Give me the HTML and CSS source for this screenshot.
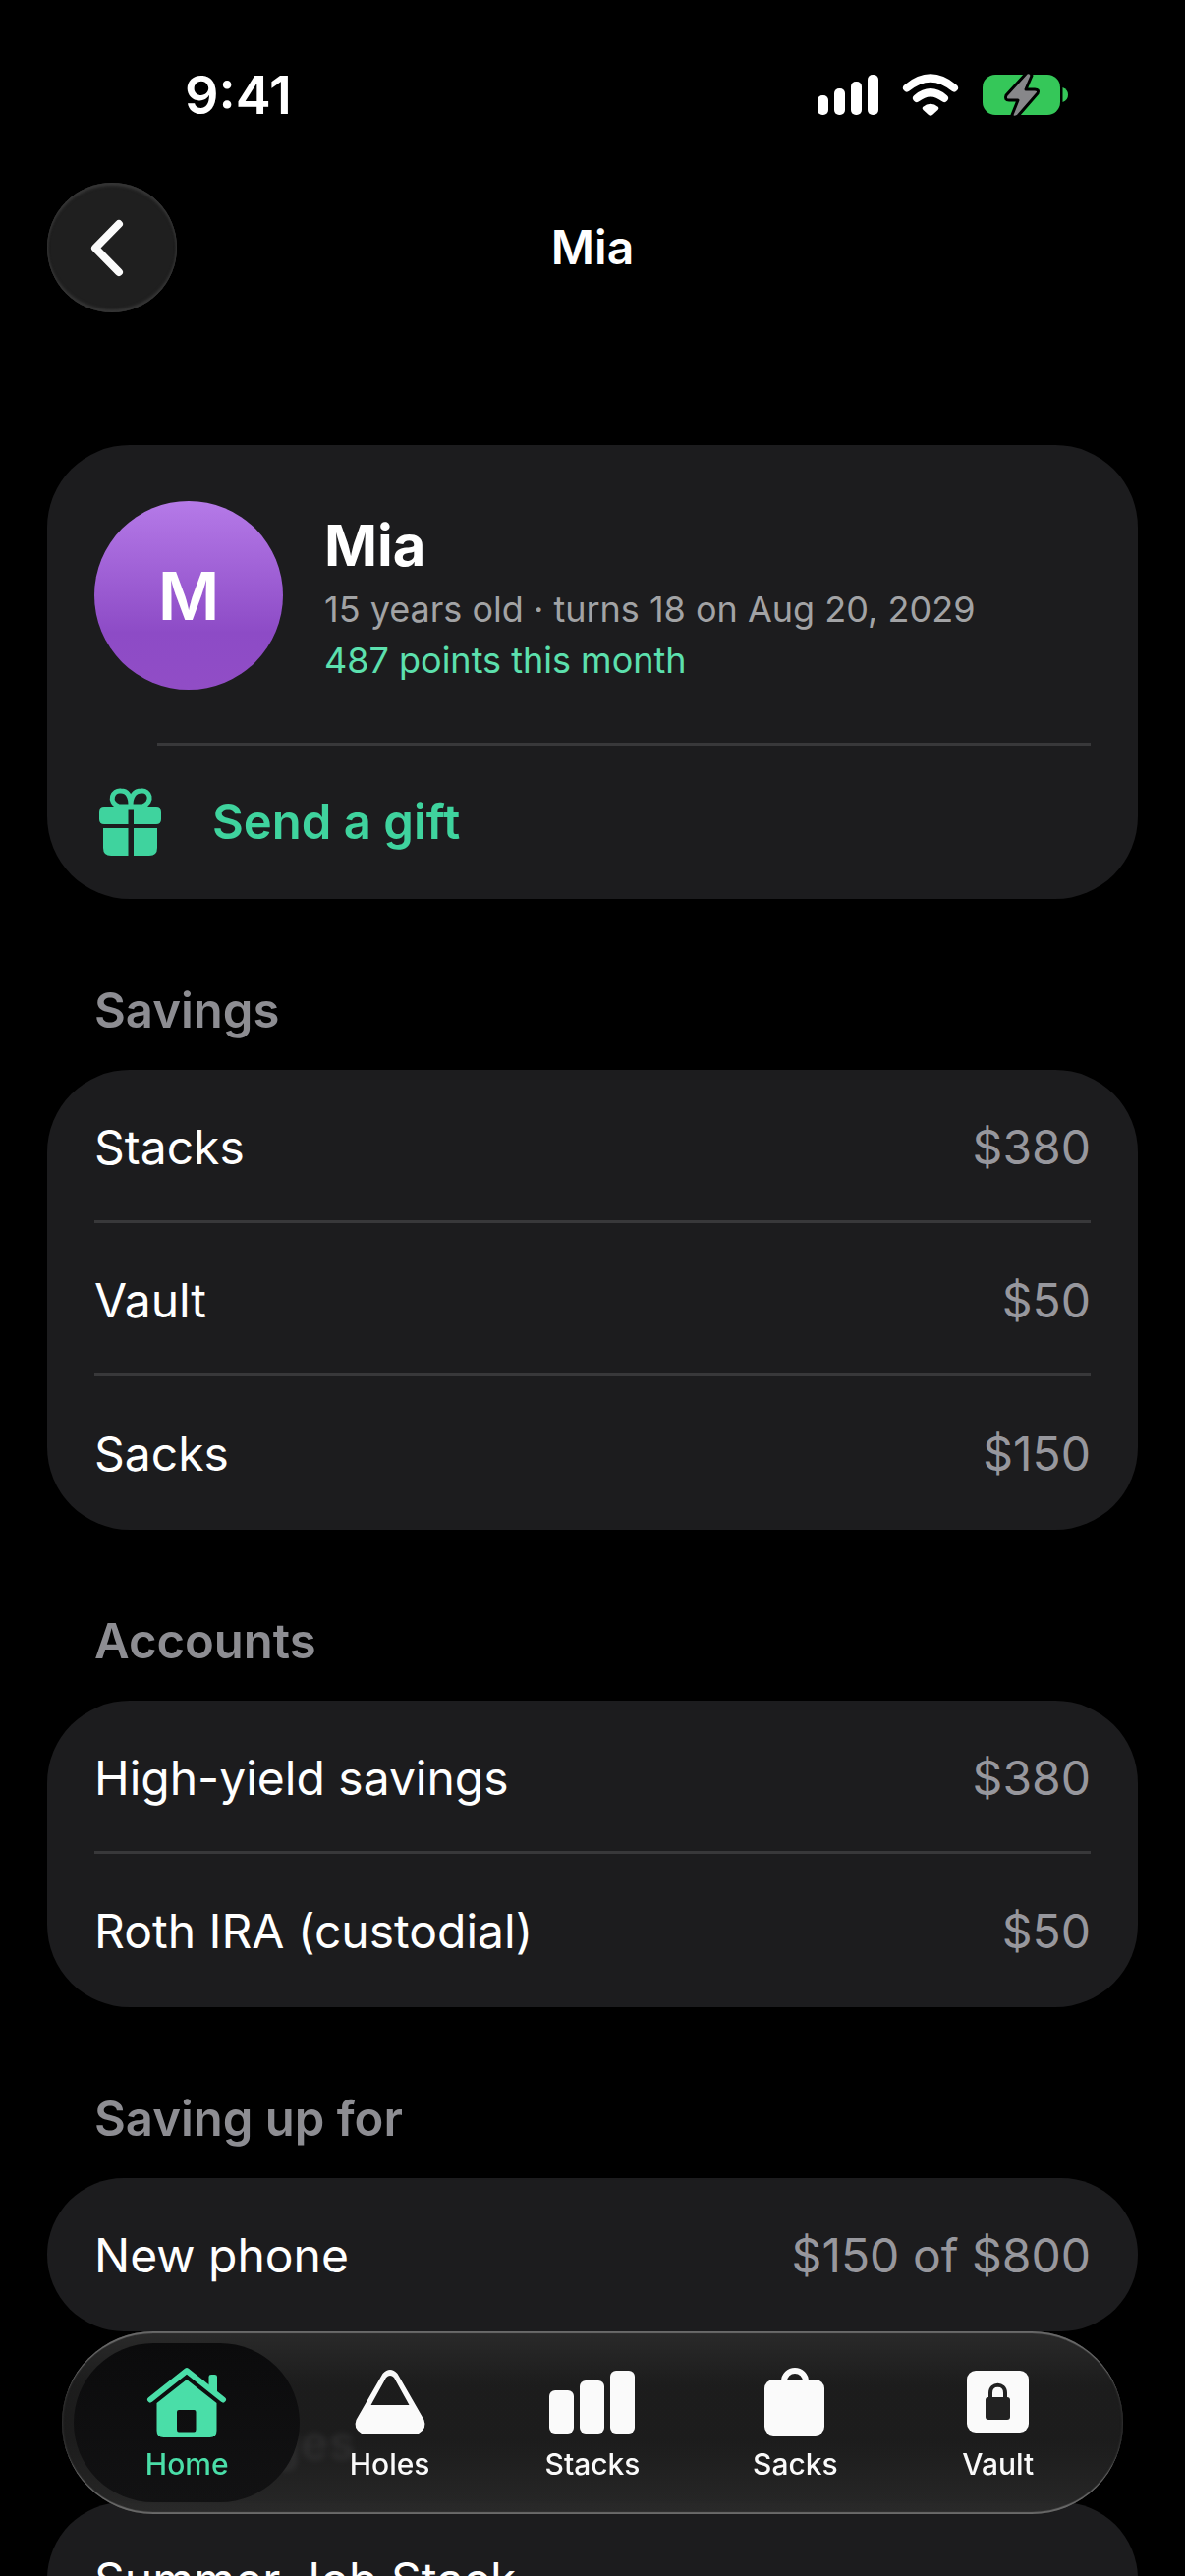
FILE: index.html
```html
<!DOCTYPE html>
<html lang="en">
<head>
  <meta charset="UTF-8">
  <meta name="viewport" content="width=device-width, initial-scale=1.0">
  <title>Mia</title>
  <link rel="stylesheet" href="styles.css">
</head>
<body>
  <div class="screen">
    <div class="status">
      <span class="time">9:41</span>
      <div class="status-icons">
        <svg width="62" height="42" viewBox="0 0 62 42" fill="#fff">
          <rect x="0" y="21" width="11" height="20" rx="5"/>
          <rect x="17" y="14" width="11" height="27" rx="5"/>
          <rect x="34" y="7" width="11" height="34" rx="5"/>
          <rect x="51" y="0" width="11" height="41" rx="5"/>
        </svg>
        <svg width="58" height="44" viewBox="0 0 58 44" fill="none" stroke="#fff" stroke-width="8" stroke-linecap="round">
          <path d="M5 14.500Q29 -5.500 53 14.500"/>
          <path d="M15 25Q29 13.500 43 25"/>
          <path d="M21 34Q29 27.500 37 34Q38 35.500 36.500 37L31 42Q29 43.500 27 42L21.500 37Q20 35.500 21 34Z" fill="#fff" stroke="none"/>
        </svg>
        <svg width="88" height="44" viewBox="0 0 88 44">
          <rect x="0" y="1" width="79" height="41" rx="13" fill="#35c759"/>
          <path d="M81.500 14Q87 16 87 21.500T81.500 29Z" fill="#35c759"/>
          <path d="M45 -1L24 22Q22 27 27 27H36L30 42Q31 46 36 43L56 20Q58 16 53 16H44L50 2Q49 -2 45 -1Z" fill="#87878a" stroke="#000" stroke-width="3" stroke-linejoin="round"/>
        </svg>
      </div>
    </div>

    <header class="topbar">
      <button class="back" type="button" aria-label="Back">
        <svg width="36" height="60" viewBox="0 0 36 60" fill="none" stroke="#fafafa" stroke-width="8" stroke-linecap="round" stroke-linejoin="round"><path d="M30 6L6 30.500L30 55"/></svg>
      </button>
      <h1>Mia</h1>
    </header>

    <main>
      <section class="card profile">
        <div class="person">
          <div class="avatar">M</div>
          <div class="info">
            <h2>Mia</h2>
            <p>15 years old · turns 18 on Aug 20, 2029</p>
            <p class="points">487 points this month</p>
          </div>
        </div>
        <button class="gift" type="button">
          <svg width="72" height="70" viewBox="-5 0 72 70" fill="#3fd39e">
            <path d="M34 19H20C8 14 14 2 22 3C29 3 32 8 32 18C32 8 36 3 43 3C51 2 56 14 44 19Z" fill="none" stroke="#3fd39e" stroke-width="5"/>
            <path d="M5 19H29.500V37H5Q0 37 0 32V24Q0 19 5 19ZM35 19H58Q63 19 63 24V32Q63 37 58 37H35Z"/>
            <path d="M4 41H29.500V69H12Q4 69 4 61ZM35 41H59V61Q59 69 51 69H35Z"/>
          </svg>
          <span>Send a gift</span>
        </button>
      </section>

      <h3>Savings</h3>
      <dl class="card">
        <div class="row"><dt>Stacks</dt><dd>$380</dd></div>
        <div class="row"><dt>Vault</dt><dd>$50</dd></div>
        <div class="row"><dt>Sacks</dt><dd>$150</dd></div>
      </dl>

      <h3>Accounts</h3>
      <dl class="card">
        <div class="row"><dt>High-yield savings</dt><dd>$380</dd></div>
        <div class="row"><dt>Roth IRA (custodial)</dt><dd>$50</dd></div>
      </dl>

      <h3>Saving up for</h3>
      <dl class="card">
        <div class="row"><dt>New phone</dt><dd>$150 of $800</dd></div>
      </dl>

      <h3>Challenges</h3>
      <div class="card">
        <div class="row">Summer Job Stack</div>
      </div>
    </main>
  </div>

  <nav class="tabs">
    <a href="#home" class="tab active" aria-current="page">
      <svg width="84" height="74" viewBox="0 0 84 74" fill="currentColor">
        <path d="M5 34.500L42 5L79 34.500" fill="none" stroke="currentColor" stroke-width="6" stroke-linecap="round" stroke-linejoin="round"/>
        <path d="M64.500 25V11Q64.500 9 67 9H70.500Q73 9 73 11V31Z"/>
        <path fill-rule="evenodd" d="M42 14L72.500 38V66Q72.500 73 65.500 73H18.500Q11.500 73 11.500 66V38ZM34 45Q32 45 32 47V65Q32 67.500 34 67.500H49.500Q51.500 67.500 51.500 65V47Q51.500 45 49.500 45Z"/>
      </svg>
      <span>Home</span>
    </a>
    <a href="#holes" class="tab">
      <svg width="84" height="74" viewBox="0 0 84 74" fill="currentColor">
        <path fill-rule="evenodd" d="M34.500 8Q42 0 49.500 8L76.500 55Q80 64 71 69H13Q4 64 7.500 55ZM38 12L22.500 40H61.500L46 12Q42 8 38 12Z"/>
      </svg>
      <span>Holes</span>
    </a>
    <a href="#stacks" class="tab">
      <svg width="88" height="74" viewBox="0 0 88 74" fill="currentColor">
        <rect x="0" y="25" width="25" height="44" rx="6"/>
        <rect x="31" y="15" width="25" height="54" rx="6"/>
        <rect x="62" y="5" width="25" height="64" rx="6"/>
      </svg>
      <span>Stacks</span>
    </a>
    <a href="#sacks" class="tab">
      <svg width="84" height="74" viewBox="0 0 84 74" fill="currentColor">
        <path d="M31 16A11 11 0 0 1 53 16" fill="none" stroke="currentColor" stroke-width="6"/>
        <rect x="11" y="14" width="61" height="57" rx="9"/>
      </svg>
      <span>Sacks</span>
    </a>
    <a href="#vault" class="tab">
      <svg width="84" height="74" viewBox="0 0 84 74" fill="currentColor">
        <rect x="10" y="5" width="63" height="63" rx="9"/>
        <rect x="29" y="32" width="25" height="23" rx="3" fill="#222"/>
        <path d="M34 33V27.500C34 17 49 17 49 27.500V33" fill="none" stroke="#222" stroke-width="4"/>
      </svg>
      <span>Vault</span>
    </a>
  </nav>
</body>
</html>
```
FILE: styles.css
```css
* { box-sizing: border-box; margin: 0; padding: 0; }
body { background: #000; color: #fff; font-family: Inter, "Liberation Sans", sans-serif; font-size: 48px; line-height: 60px; }
button { border: none; font: inherit; color: inherit; cursor: pointer; }
svg { display: block; flex: none; overflow: visible; }

.screen { height: 100vh; overflow-y: auto; scrollbar-width: none; }

.status { display: flex; justify-content: space-between; align-items: center; padding: 67px 118px 59px 188px; }
.time { font-size: 54px; font-weight: 600; }
.status-icons { display: flex; align-items: center; gap: 24px; }

.topbar { display: grid; grid-template-columns: 132px 1fr 132px; align-items: center; padding: 0 48px; }
.topbar h1 { font-size: 48px; font-weight: 600; text-align: center; }
.back {
  display: flex; align-items: center; justify-content: center;
  width: 132px; height: 132px; padding-right: 10px; border-radius: 50%;
  background: #1f1f1f;
  box-shadow: inset 0 3px 3px #363636, inset 0 -3px 3px #363636, inset 0 0 2px 1px #272727;
}

main { padding: 135px 48px 200px; }
h3 { margin: 84px 48px 30px; font-size: 49px; font-weight: 600; color: #8d8d92; }
.card { background: #1c1c1e; border-radius: 84px; padding: 0 48px; }

.person { display: flex; align-items: center; gap: 42px; padding: 57px 0 54px; }
.avatar {
  display: flex; align-items: center; justify-content: center; flex: none;
  width: 192px; height: 192px; border-radius: 50%;
  background: linear-gradient(#b57ae8, #8d4bc6 70%, #914dc6);
  font-size: 68px; font-weight: 600;
}
.info { padding-top: 6px; }
.info h2 { font-size: 58px; line-height: 70px; font-weight: 700; margin-bottom: 4px; }
.info p { font-size: 36px; line-height: 52px; color: #a2a3a5; }
.info .points { color: #5ce0ae; }

.gift { display: flex; align-items: center; gap: 48px; width: 100%; height: 156px; background: none; color: #3fd39e; font-size: 49px; font-weight: 600; }
.profile .person { position: relative; border-bottom: 3px solid transparent; }
.profile .person::after { content: ""; position: absolute; left: 64px; right: 0; bottom: -3px; height: 3px; background: #38383a; }

.row { display: flex; justify-content: space-between; align-items: center; min-height: 156px; border-bottom: 3px solid #38383a; padding-top: 5px; }
.row:last-child { border-bottom-color: transparent; }
.row dd { color: #97979d; }

.tabs {
  position: fixed; left: 63px; right: 63px; bottom: 63px;
  display: flex; padding: 12px 24px; border-radius: 93px;
  background: linear-gradient(rgba(48, 48, 48, .88), rgba(32, 32, 32, .88) 30%, rgba(32, 32, 32, .88) 60%, rgba(44, 44, 44, .9));
  backdrop-filter: blur(3px);
  box-shadow: inset 0 3px 1px -1px #6a6a6a, inset 0 -3px 1px -1px #6a6a6a, inset 0 0 2px 1px #303030;
}
.tab {
  position: relative; flex: 1; display: flex; flex-direction: column; align-items: center; gap: 8px;
  height: 162px; padding-top: 23px;
  color: #fafafa; text-decoration: none; font-size: 30px; line-height: 36px; font-weight: 500;
}
.tab svg, .tab span { position: relative; }
.tab.active { color: #4adea8; }
.tab.active::before { content: ""; position: absolute; inset: 0 -12px; border-radius: 81px; background: linear-gradient(#0b0b0c, #121213); }
```
